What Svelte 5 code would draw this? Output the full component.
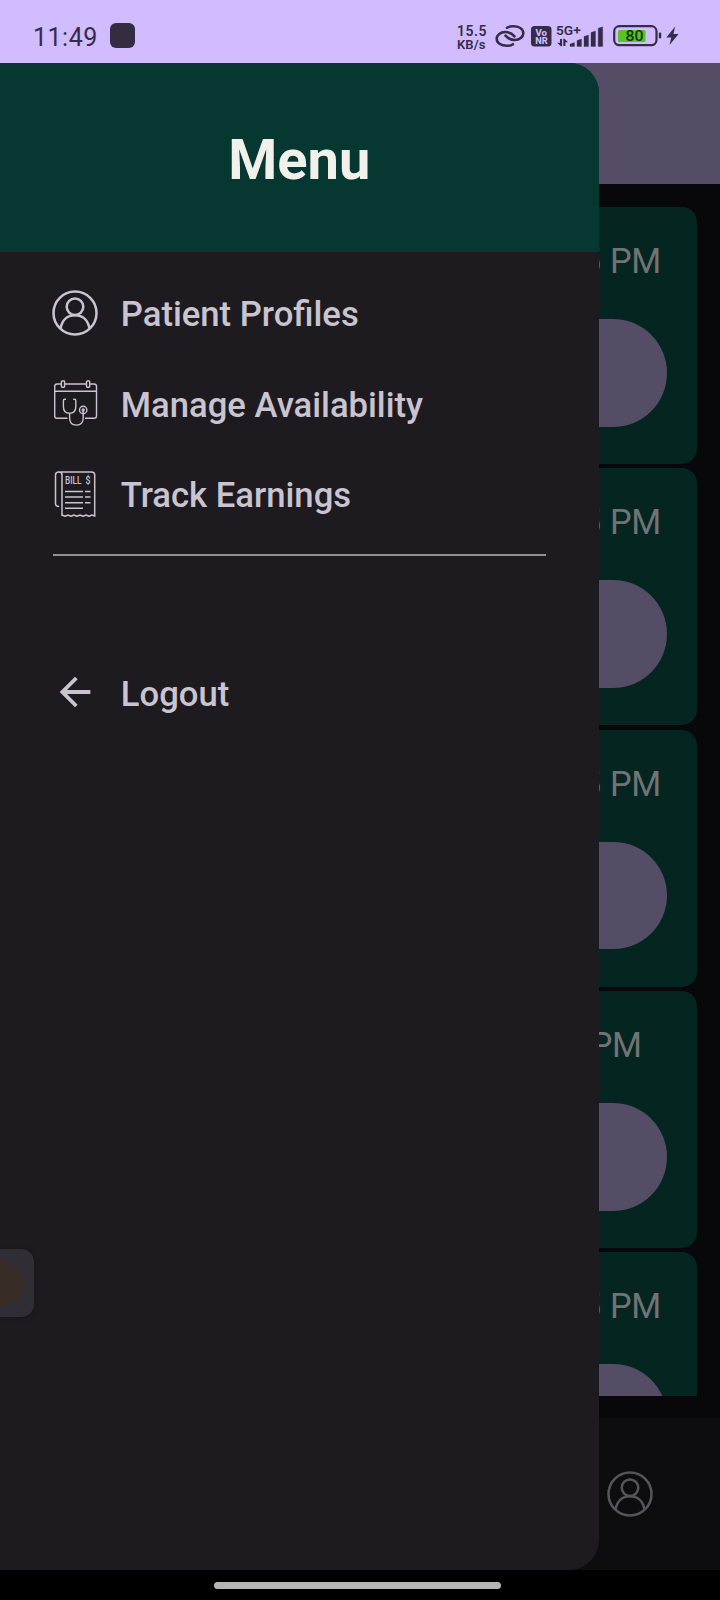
<script>
  const visits = [
    { time: '11:45 PM', inset: 36.4 },
    { time: '11:45 PM', inset: 36.4 },
    { time: '11:45 PM', inset: 36.4 },
    { time: '11:00 PM', inset: 55.7 },
    { time: '11:45 PM', inset: 36.4 }
  ];
  const items = [
    { icon: 'user', label: 'Patient Profiles' },
    { icon: 'calendar', label: 'Manage Availability' },
    { icon: 'bill', label: 'Track Earnings' }
  ];
  const bars = [
    [0, 16.5, 4], [7, 13, 7.5], [14, 9, 11.5], [21, 5, 15.5], [28.2, 0.8, 19.7]
  ];
</script>

{#snippet userIcon()}
  <svg class="icon" viewBox="0 0 46 46" fill="none" stroke="currentColor" stroke-width="2.5">
    <circle cx="23" cy="23" r="21.5" />
    <circle cx="23" cy="16.8" r="8.3" />
    <path d="M8.600 38.400C10 30 15.500 25.200 23 25.200s13 4.800 14.400 13.200" />
  </svg>
{/snippet}

<div class="screen">
  <header class="status">
    <span class="clock">11:49</span>
    <span class="app-dot"></span>
    <div class="speed"><b>15.5</b><b class="unit">KB/s</b></div>
    <svg class="link" width="30" height="24" viewBox="0 0 30 24" fill="none" stroke="currentColor" stroke-width="2.600" stroke-linecap="round">
      <path d="M12 3.800C13.500 2.600 15.500 2.200 18 2.200c6.500 0 10.300 3 10.300 7s-4 6.800-8.300 6.800c-4.200 0-7-1.500-9.500-4.300" />
      <path d="M18 20.200C16.500 21.400 14.500 21.800 12 21.800c-6.500 0-10.300-3-10.300-7S5.700 8 10 8c4.200 0 7 1.500 9.500 4.300" />
    </svg>
    <svg class="vonr" width="21" height="21" viewBox="0 0 21 21">
      <rect width="20.500" height="20.500" rx="3.500" fill="currentColor" />
      <text x="4.500" y="9.500" textLength="11.500" lengthAdjust="spacingAndGlyphs">Vo</text>
      <text x="4.300" y="17.800" textLength="12.500" lengthAdjust="spacingAndGlyphs">NR</text>
    </svg>
    <svg class="signal" width="48" height="24" viewBox="0 0 48 24" fill="currentColor">
      <text x="0" y="11" textLength="24.800" lengthAdjust="spacingAndGlyphs">5G+</text>
      <path d="M4 15h2.100v7.300H4.800L1.300 18.800h2.700zM7.300 22V14.700h1.300l3.500 3.500H9.400V22z" />
      {#each bars as [x, y, h]}
        <path d="M{14 + x} {y + 3.500}l4.500-1.500v{h}h-4.500z" stroke="currentColor" stroke-width=".3" stroke-linejoin="round" />
      {/each}
    </svg>
    <svg class="battery" width="49" height="22" viewBox="0 0 49 22">
      <rect x="1.200" y="1.200" width="42.300" height="19" rx="5.200" fill="none" stroke="currentColor" stroke-width="2.200" />
      <rect x="5" y="5" width="27.500" height="12" rx="1.500" fill="#58c322" />
      <rect x="45.800" y="7.500" width="2.400" height="6" rx="1" fill="currentColor" />
      <text x="12.500" y="16.400" textLength="18" lengthAdjust="spacingAndGlyphs">80</text>
    </svg>
    <svg class="bolt" width="13" height="20" viewBox="0 0 13 20" fill="currentColor">
      <path d="M9.200.5.300 11.600h5L3.500 19 12.600 8H7.400z" />
    </svg>
  </header>

  <div class="stage">
    <main class="page">
      <div class="topbar"></div>
      <section class="list">
        {#each visits as v}
          <article class="card">
            <div class="time" style="margin-right:{v.inset}px">{v.time}</div>
            <div class="button"></div>
          </article>
        {/each}
      </section>
      <nav class="tabs">{@render userIcon()}</nav>
    </main>

    <aside class="drawer">
      <h1>Menu</h1>
      <ul>
        {#each items as item}
          <li>
            {#if item.icon === 'user'}
              {@render userIcon()}
            {:else if item.icon === 'calendar'}
              <svg class="icon" viewBox="0 0 46 46" fill="none" stroke="currentColor" stroke-width="1.400">
                <path d="M15.500 38.300H4.900Q2.700 38.300 2.700 36V6.500Q2.700 4 5.200 4H9.200M12.700 4H34.300M37.800 4H42Q44.500 4 44.500 6.500V36Q44.500 38.300 42.200 38.300H33M2.700 11.200H44.500" />
                <rect x="9.400" y="1" width="3.200" height="6.300" rx=".7" />
                <rect x="34.500" y="1" width="3.200" height="6.300" rx=".7" />
                <path d="M14 19.300h-1.300q-1.300 0-1.300 1.500v5.700q0 6.800 6.200 6.800t6.200-6.800v-5.700q0-1.500-1.300-1.500h-1.300M17.600 33.300v4.500q0 7.300 6.800 7.300t6.800-7.300V30.500" />
                <circle cx="31.200" cy="30" r="3.700" /><circle cx="31.200" cy="30" r="1" />
              </svg>
            {:else}
              <svg class="icon" viewBox="0 0 46 46" fill="none" stroke="currentColor" stroke-width="1.500">
                <path d="M10 45V4Q10 1 6.800 1T3.500 4V32.500Q3.500 35.500 7.200 35.500M6.800 1H39.500Q42.700 1 42.700 4V45L40 44l-3 1.300L34 44l-3 1.300L28 44l-3 1.300L22 44l-3 1.300L16 44l-3 1.300L10 44" />
                <path d="M13 20.500H31M33 20.500h5.500M13 26H31M33 26h5.500M13 31.700H31M33 31.700h5.500M13 37.200H31" />
                <text x="13" y="13" textLength="16.500" lengthAdjust="spacingAndGlyphs">BILL</text>
                <text x="33.600" y="13" textLength="5" lengthAdjust="spacingAndGlyphs">$</text>
              </svg>
            {/if}
            <span>{item.label}</span>
          </li>
        {/each}
      </ul>
      <hr />
      <div class="logout">
        <svg class="icon" viewBox="0 0 24 24" fill="currentColor">
          <path d="M20 11H7.830l5.590-5.590L12 4l-8 8 8 8 1.410-1.410L7.830 13H20z" />
        </svg>
        <span>Logout</span>
      </div>
    </aside>
    <div class="bubble"><i></i></div>
  </div>
  <footer class="gesture"><span></span></footer>
</div>

<style>
  :global(body) { margin: 0; background: #000; }
  .screen {
    width: 720px; height: 1600px; overflow: hidden; background: #000;
    display: flex; flex-direction: column; font-family: Roboto, sans-serif;
  }
  .status {
    height: 63px; flex: none; box-sizing: border-box; background: #d0bcff; color: #352c48;
    display: flex; align-items: flex-start; padding-left: 33px;
  }
  .clock { font-size: 25px; line-height: 30px; margin-top: 22.600px; width: 77px; letter-spacing: .5px; font-weight: 430; }
  .app-dot { width: 25px; height: 25px; margin-top: 23px; border-radius: 6px; background: #342d42; }
  .speed { width: 38px; margin: 25px 0 0 322px; display: flex; flex-direction: column; font-size: 14px; line-height: 13px; letter-spacing: .5px; }
  .speed b { font-weight: 600; }
  .speed .unit { font-size: 13px; letter-spacing: .1px; }
  .link { margin-top: 24px; }
  .vonr { margin: 26px 0 0 6px; }
  .vonr text { font-size: 9px; font-weight: 800; fill: #d0bcff; }
  .signal { margin: 24px 0 0 4px; }
  .signal text { font-size: 12.500px; font-weight: 600; }
  .battery { margin: 25.300px 0 0 9px; }
  .battery text { font-size: 15.500px; font-weight: 500; fill: #173409; }
  .bolt { margin: 26px 0 0 4px; }

  .stage { position: relative; flex: none; height: 1506.500px; }
  .page { height: 100%; display: flex; flex-direction: column; background: #08070a; }
  .topbar { height: 121px; background: #554c66; flex: none; }
  .list {
    height: 1211.700px; flex: none; box-sizing: border-box; padding: 23px 22.700px 0; overflow: hidden;
    display: flex; flex-direction: column; gap: 4.300px;
  }
  .card {
    height: 257px; flex: none; border-radius: 15px; background: #052521;
    display: flex; flex-direction: column; align-items: flex-end;
  }
  .time { height: 40px; margin-top: 34px; font-size: 34.300px; line-height: 40px; letter-spacing: -.3px; word-spacing: .9px; color: #717374; white-space: nowrap; }
  .button { width: 240px; height: 107.500px; margin: 38.200px 30.300px 0 0; border-radius: 54px; background: #554c66; }
  .tabs {
    margin-top: 22.300px; flex: 1; background: #0d0d0f; color: #57555a;
    display: flex; justify-content: flex-end; align-items: center; padding-right: 67px;
  }
  .icon { width: 46px; height: 46px; flex: none; display: block; }

  .drawer {
    position: absolute; left: 0; top: 0; bottom: 0; width: 598.700px; overflow: hidden;
    background: #1e1b20; color: #cac4d0; border-radius: 0 30px 30px 0;
    font-size: 34.650px; font-weight: 500;
  }
  h1 {
    margin: 0; height: 188.700px; box-sizing: border-box; padding-top: 64px; background: #073731;
    color: #f1f1ec; font-size: 56px; line-height: 66px; font-weight: 700; text-align: center;
  }
  ul { margin: 15.800px 0 0; padding: 0; list-style: none; }
  li, .logout { height: 90.600px; display: flex; align-items: center; padding-left: 52.200px; gap: 22.600px; white-space: nowrap; }
  li span, .logout span { line-height: 40px; padding-top: 3px; }
  .icon text { font-size: 10px; font-weight: 500; fill: currentColor; stroke: none; }
  hr { margin: 14.400px 0 0 52.700px; width: 493.300px; height: 2px; border: 0; background: #938f99; }
  .logout { margin-top: 91px; }
  .logout span { padding-top: 4px; }
  .bubble {
    position: absolute; left: 0; top: 1186px; width: 34px; height: 68px; border-radius: 0 13px 13px 0;
    background: #302e34; overflow: hidden; display: flex; align-items: center;
    box-shadow: 0 0 5px #17151a;
  }
  .bubble i { width: 45px; height: 45px; flex: none; margin-left: -22px; border-radius: 50%; background: #382c27; }
  .gesture { flex: 1; display: flex; justify-content: center; align-items: flex-start; padding-top: 12px; }
  .gesture span { width: 287px; height: 7.500px; border-radius: 4px; background: #b5b5b5; margin-left: -5px; }
</style>
